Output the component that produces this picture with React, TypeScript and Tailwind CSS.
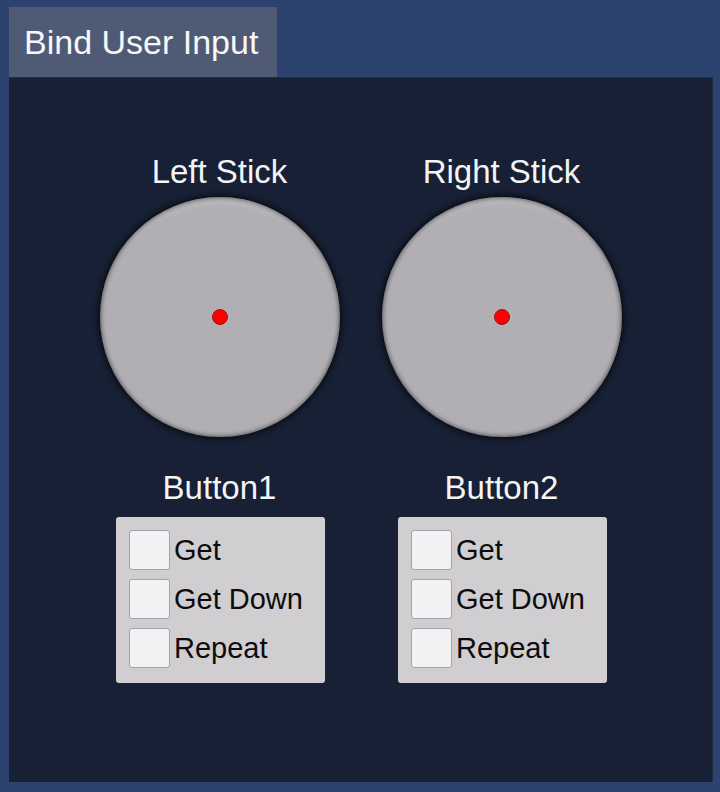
import React from "react";

function Stick({ label }: { label: string }) {
  return (
    <div className="flex flex-col items-center">
      <div className="text-[33px] leading-[38px] text-[#f4f4f6]">{label}</div>
      <div className="mt-[6px] w-[240px] h-[240px] rounded-full bg-[#b1afb3] shadow-[0_0_5px_2px_rgba(8,10,16,0.9),inset_0_0_4px_1px_rgba(20,20,24,0.55),inset_0_12px_6px_-6px_rgba(255,255,255,0.16)] flex items-center justify-center">
        <div className="w-[16px] h-[16px] rounded-full bg-[#ff0000] border border-[#a01010]" />
      </div>
    </div>
  );
}

function Check({ label }: { label: string }) {
  return (
    <div className="flex items-center h-[40px]">
      <div className="w-[41px] h-[40px] rounded-[3px] bg-[#f3f1f4] border border-[#a4a2a6]" />
      <span className="ml-[4px] text-[29px] leading-[40px] text-[#0c0c0c]">{label}</span>
    </div>
  );
}

function ButtonGroup({ label }: { label: string }) {
  return (
    <div className="flex flex-col items-center">
      <div className="text-[33px] leading-[38px] text-[#f4f4f6]">{label}</div>
      <div className="mt-[10px] ml-[2px] w-[209px] h-[166px] rounded-[3px] bg-[#d0ced1] pl-[13px] pt-[13px] flex flex-col gap-[9px]">
        <Check label="Get" />
        <Check label="Get Down" />
        <Check label="Repeat" />
      </div>
    </div>
  );
}

export default function App() {
  return (
    <div
      className="w-[720px] h-[792px] bg-[#2c4370] pt-[7px] px-[9px] flex flex-col"
      style={{ fontFamily: '"Liberation Sans", Arial, sans-serif' }}
    >
      <div className="w-[268px] h-[70px] bg-[#4f5b75] flex items-center pl-[15px]">
        <span className="text-[34px] leading-[38px] text-[#f7f7f9]">Bind User Input</span>
      </div>
      <div className="w-[704px] h-[705px] bg-[#172034] border-t border-r border-[#222c45] pt-[75px]">
        <div className="grid grid-cols-[282px_282px] justify-center">
          <Stick label="Left Stick" />
          <Stick label="Right Stick" />
        </div>
        <div className="mt-[32px] grid grid-cols-[282px_282px] justify-center">
          <ButtonGroup label="Button1" />
          <ButtonGroup label="Button2" />
        </div>
      </div>
    </div>
  );
}
